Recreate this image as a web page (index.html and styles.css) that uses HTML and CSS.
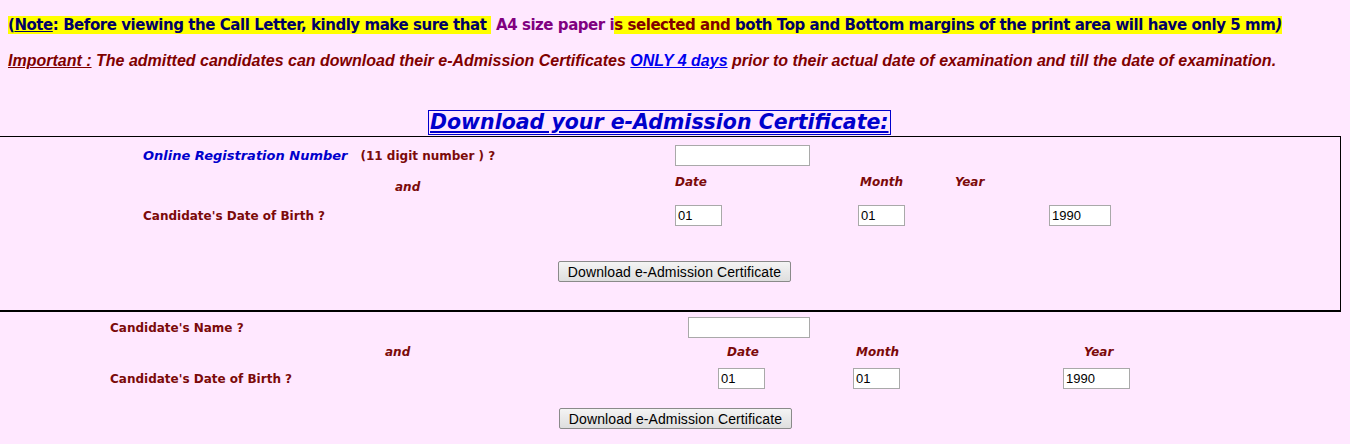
FILE: index.html
```html
<!DOCTYPE html>
<html>
<head>
<meta charset="utf-8">
<link rel="stylesheet" href="styles.css">
</head>
<body>
<div class="notes">
  <p class="note"><span class="hl">(<u>Note</u>: Before viewing the Call Letter, kindly make sure that&nbsp;</span> <span class="purple">A4 size paper i</span><span class="hl maroon">s selected and</span><span class="hl"> both Top and Bottom margins of the print area will have only 5 mm<i>)</i></span></p>
  <p class="important"><u>Important :</u> The admitted candidates can download their e-Admission Certificates <a class="days">ONLY 4 days</a> prior to their actual date of examination and till the date of examination.</p>
</div>
<div class="titlewrap"><span class="title">Download your e-Admission Certificate:</span></div>
<div class="sec1">
  <div class="row r1">
    <div class="c1"><span class="blue">Online Registration Number</span><span class="digits">(11 digit number ) ?</span></div>
    <input class="txt reg" type="text">
  </div>
  <div class="row r2">
    <div class="and1"><i>and</i></div>
    <div class="d1"><i>Date</i></div>
    <div class="m1"><i>Month</i></div>
    <div><i>Year</i></div>
  </div>
  <div class="row r3">
    <div class="c1">Candidate's Date of Birth ?</div>
    <input class="txt sm" type="text" value="01">
    <input class="txt sm mo1" type="text" value="01">
    <input class="txt yr yr1" type="text" value="1990">
  </div>
  <div class="row r4">
    <button class="btn b1">Download e-Admission Certificate</button>
  </div>
</div>
<div class="sec2">
  <div class="row s1">
    <div class="c2">Candidate's Name ?</div>
    <input class="txt name" type="text">
  </div>
  <div class="row s2">
    <div class="and2"><i>and</i></div>
    <div class="d2"><i>Date</i></div>
    <div class="m2"><i>Month</i></div>
    <div><i>Year</i></div>
  </div>
  <div class="row s3">
    <div class="c2b">Candidate's Date of Birth ?</div>
    <input class="txt sm" type="text" value="01">
    <input class="txt sm mo2" type="text" value="01">
    <input class="txt yr yr2" type="text" value="1990">
  </div>
  <div class="row s4">
    <button class="btn b2">Download e-Admission Certificate</button>
  </div>
</div>
</body>
</html>
```
FILE: styles.css
```css
html, body {
  margin: 0;
  padding: 0;
  background: #ffe8ff;
  width: 1350px;
  height: 444px;
  overflow: hidden;
}
body {
  font-family: "DejaVu Sans", Verdana, sans-serif;
}
.notes {
  padding-left: 8px;
  padding-top: 15px;
}
p { margin: 0; }
.note {
  font-size: 15px;
  font-weight: bold;
  line-height: 20px;
  color: #000066;
  letter-spacing: -0.45px;
}
.hl { background: #ffff00; }
.purple { color: #800080; }
.maroon { color: #800000; }
.important {
  margin-top: 17px;
  font-family: "Liberation Sans", Arial, sans-serif;
  font-style: italic;
  font-weight: bold;
  font-size: 16px;
  line-height: 18px;
  color: #800000;
}
.days { color: #0000ee; text-decoration: underline; }
.titlewrap {
  margin-top: 40px;
  padding-left: 428px;
  height: 26px;
}
.title {
  display: inline-block;
  border: 1px solid #0000cc;
  font-family: "DejaVu Sans", Verdana, sans-serif;
  font-weight: bold;
  font-style: italic;
  font-size: 20.5px;
  line-height: 23px;
  color: #0000cc;
  text-decoration: underline;
  padding: 0 1px;
}
.sec1 {
  width: 1340px;
  height: 173px;
  border-top: 1px solid #000;
  border-right: 1px solid #000;
  border-bottom: 2px solid #000;
  box-sizing: content-box;
}
.row {
  display: flex;
  align-items: center;
  font-size: 12px;
  font-weight: bold;
  color: #7b0a0a;
}
.r1 { margin-top: 8px; height: 20px; }
.c1 { width: 532px; padding-left: 143px; }
.blue { color: #0000cc; font-style: italic; font-size: 13px; }
.digits { margin-left: 13px; }
.txt {
  box-sizing: border-box;
  height: 21px;
  border: 1px solid #a9a9a9;
  background: #fff;
  font-family: "Liberation Sans", Arial, sans-serif;
  font-size: 13px;
  font-weight: normal;
  padding: 1px 2px;
  margin: 0;
  color: #000;
}
.reg { width: 135px; }
.r2 { margin-top: 10px; height: 14px; }
.and1 { width: 280px; padding-left: 395px; margin-top: 10px; }
.d1 { width: 185px; }
.m1 { width: 95px; }
.r3 { margin-top: 16px; height: 21px; }
.sm { width: 47px; }
.mo1 { margin-left: 136px; }
.yr { width: 62px; }
.yr1 { margin-left: 144px; }
.r4 { margin-top: 35px; padding-left: 558px; }
.btn {
  font-family: "Liberation Sans", Arial, sans-serif;
  font-size: 14px;
  font-weight: normal;
  color: #000;
  height: 21px;
  width: 233px;
  padding: 0;
  border: 1px solid #8a8a8a;
  border-radius: 2px;
  background: linear-gradient(#f4f4f4, #dedede);
  letter-spacing: 0.1px;
}
.s1 { margin-top: 5px; height: 21px; }
.c2 { width: 578px; padding-left: 110px; }
.name { width: 122px; }
.s2 { margin-top: 7px; height: 14px; }
.and2 { width: 342px; padding-left: 385px; }
.d2 { width: 129px; }
.m2 { width: 228px; }
.s3 { margin-top: 9px; height: 21px; }
.c2b { width: 608px; padding-left: 110px; }
.mo2 { margin-left: 88px; }
.yr2 { width: 67px; margin-left: 163px; }
.s4 { margin-top: 19px; padding-left: 559px; }
```
